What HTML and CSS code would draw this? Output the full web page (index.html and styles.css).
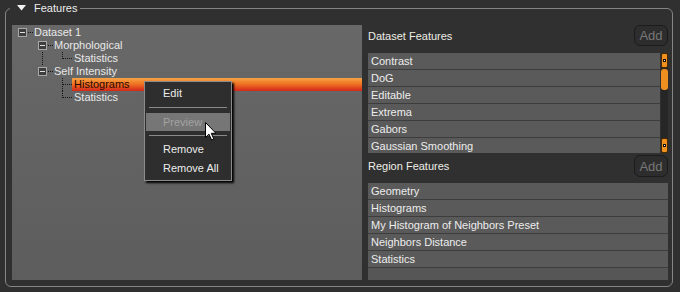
FILE: index.html
```html
<!doctype html>
<html lang="en">
<head>
    <meta charset="utf-8">
    <title>Features</title>
    <link rel="stylesheet" href="styles.css">
</head>
<body>
<fieldset class="features">
    <legend><svg class="arrow-down" width="9" height="6" viewBox="0 0 9 6"><polygon points="0,0 9,0 4.5,5.5" fill="#f2f2f2"/></svg>Features</legend>
    <div class="split">
        <!-- bal oldali fa -->
        <div class="tree">
            <div class="node"><span class="toggle"></span><span class="hline"></span><span class="label">Dataset 1</span></div>
            <div class="node"><span class="indent"></span><span class="toggle"></span><span class="hline"></span><span class="label">Morphological</span></div>
            <div class="node"><span class="indent"></span><span class="pipe"></span><span class="elbow last"></span><span class="label">Statistics</span></div>
            <div class="node"><span class="indent"></span><span class="toggle"></span><span class="hline"></span><span class="label">Self Intensity</span></div>
            <div class="node"><span class="indent"></span><span class="pipe blank"></span><span class="elbow"></span><span class="label selected">Histograms</span></div>
            <div class="node"><span class="indent"></span><span class="pipe blank"></span><span class="elbow last"></span><span class="label">Statistics</span></div>
        </div>
        <!-- jobb oldali listák -->
        <div class="side">
            <div class="side-head">
                <span>Dataset Features</span>
                <button class="add-button">Add</button>
            </div>
            <div class="list list-dataset">
                <div class="rows">
                    <div class="row">Contrast</div>
                    <div class="row">DoG</div>
                    <div class="row">Editable</div>
                    <div class="row">Extrema</div>
                    <div class="row">Gabors</div>
                    <div class="row">Gaussian Smoothing</div>
                </div>
                <div class="scrollbar">
                    <div class="sb-button"><i></i></div>
                    <div class="sb-thumb"></div>
                    <div class="sb-track"></div>
                    <div class="sb-button"><i></i></div>
                </div>
            </div>
            <div class="side-head region-head">
                <span>Region Features</span>
                <button class="add-button">Add</button>
            </div>
            <div class="list list-region">
                <div class="rows">
                    <div class="row">Geometry</div>
                    <div class="row">Histograms</div>
                    <div class="row">My Histogram of Neighbors Preset</div>
                    <div class="row">Neighbors Distance</div>
                    <div class="row">Statistics</div>
                </div>
            </div>
        </div>
    </div>
</fieldset>

<!-- jobb klikk menü -->
<div class="context-menu">
    <div class="menu-item">Edit</div>
    <div class="menu-sep"></div>
    <div class="menu-item disabled">Preview</div>
    <div class="menu-sep"></div>
    <div class="menu-item">Remove</div>
    <div class="menu-item">Remove All</div>
</div>
<svg class="cursor" width="12" height="19" viewBox="0 0 12 19"><path d="M0.5,0.5 L0.5,15.5 L4,12.2 L6.6,18 L8.8,17 L6.3,11.3 L11,11.3 Z" fill="#fff" stroke="#000" stroke-width="1"/></svg>
</body>
</html>
```

FILE: styles.css
```css
body {
    margin: 0;
    width: 680px;
    height: 292px;
    background-color: #303030;
    font-family: "Liberation Sans", Arial, sans-serif;
    font-size: 11px;
    color: #e8e8e8;
    position: relative;
    overflow: hidden;
}

.features {
    margin: 1px 7px 0 5px;
    padding: 10px 4px 6px 6px;
    border: 1px solid #858585;
    border-radius: 6px;
}

.features legend {
    padding: 0 3px 0 7px;
    margin-left: -2px;
    font-size: 11px;
    line-height: 14px;
    color: #ececec;
}

.arrow-down {
    margin-right: 8px;
    vertical-align: 1px;
}

.split {
    display: flex;
    gap: 6px;
    height: 255px;
}

/* fa */
.tree {
    width: 350px;
    padding-top: 1px;
    background: linear-gradient(#686868, #5d5d5d);
}

.node {
    display: flex;
    align-items: center;
    height: 13px;
    padding-left: 6px;
}

.indent {
    width: 20px;
    flex: none;
}

.toggle {
    width: 9px;
    height: 9px;
    box-sizing: border-box;
    border: 1px solid #a8a8a8;
    background: #3e3e3e linear-gradient(#e0e0e0, #e0e0e0) no-repeat center / 5px 1px;
    flex: none;
}

.hline {
    width: 5px;
    margin: 0 1px 0 1px;
    border-top: 1px dotted #151515;
    flex: none;
}

.pipe {
    width: 19px;
    height: 13px;
    margin-left: 4px;
    border-left: 1px dotted #151515;
    flex: none;
}

.pipe.blank {
    border-left-color: transparent;
}

.elbow {
    width: 9px;
    height: 13px;
    align-self: flex-start;
    border-left: 1px dotted #151515;
    background: repeating-linear-gradient(to right, #151515 0 1px, transparent 1px 2px) no-repeat 0 6px / 100% 1px;
    flex: none;
}

.elbow.last {
    height: 7px;
}

.label {
    padding-left: 2px;
    line-height: 13px;
    white-space: nowrap;
}

.node > .hline + .label {
    padding-left: 0;
}

.label.selected {
    flex: 1;
    color: #2a0800;
    background: linear-gradient(#f6a443, #ef7423 45%, #d3261a);
}

/* jobb oldal */
.side {
    flex: 1;
    display: flex;
    flex-direction: column;
}

.side-head {
    display: flex;
    align-items: center;
    justify-content: space-between;
    height: 21px;
    color: #eeeee6;
}

.region-head {
    height: 22px;
    margin-top: 2px;
}

.add-button {
    width: 34px;
    height: 100%;
    padding: 0;
    background-color: #2d2d2d;
    border: 1px solid #1c1c1c;
    border-radius: 6px;
    color: #787878;
    font-family: "Liberation Sans", Arial, sans-serif;
    font-size: 13px;
}

.list {
    display: flex;
    gap: 1px;
    overflow: hidden;
}

.list-dataset {
    height: 100px;
    margin-top: 7px;
}

.list-region {
    height: 97px;
    margin-top: 6px;
    background-color: #565656;
}

.rows {
    flex: 1;
    min-width: 0;
}

.row {
    height: 16px;
    line-height: 17px;
    padding-left: 3px;
    background-color: #5a5a5a;
    border-bottom: 1px solid #3d3d3d;
    color: #ededed;
    white-space: nowrap;
}

/* görgetősáv */
.scrollbar {
    width: 7px;
    display: flex;
    flex-direction: column;
    background-color: #262626;
    border-radius: 3px;
}

.sb-button {
    height: 15px;
    box-sizing: border-box;
    border: 1px solid #4a2a00;
    border-radius: 2px;
    background-color: #f0911f;
    display: flex;
    align-items: center;
    justify-content: center;
}

.sb-button i {
    width: 1px;
    height: 1px;
    border: 1px solid #111;
    background-color: #fff;
}

.sb-thumb {
    height: 21px;
    margin-top: 1px;
    border-radius: 3px;
    background-color: #ef8f1f;
}

.sb-track {
    flex: 1;
}

/* menü */
.context-menu {
    position: absolute;
    left: 144px;
    top: 81px;
    width: 84px;
    padding: 2px 1px;
    background-color: #2e2e2e;
    border: 1px solid #8c8c8c;
    box-shadow: 2px 2px 2px #000;
}

.menu-item {
    height: 19px;
    line-height: 19px;
    padding-left: 17px;
    color: #ececec;
}

.menu-item.disabled {
    height: 18px;
    margin-bottom: 1px;
    line-height: 18px;
    background-color: #767676;
    color: #a2a2a2;
}

.menu-sep {
    height: 1px;
    margin: 4px 3px 5px;
    background-color: #8a8a8a;
}

.menu-sep + .menu-item:not(.disabled) {
    margin-top: -1px;
}

.cursor {
    position: absolute;
    left: 205px;
    top: 122px;
}
```
